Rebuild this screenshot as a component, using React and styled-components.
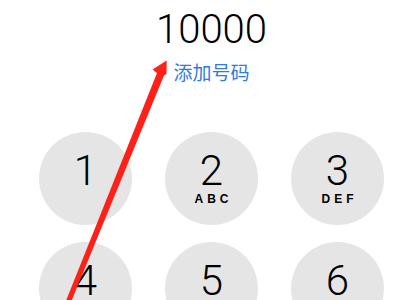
import React from 'react';
import styled, { createGlobalStyle } from 'styled-components';

const GlobalStyle = createGlobalStyle`
  html, body {
    margin: 0;
    padding: 0;
    background: #fff;
  }
  body {
    font-family: Roboto, "Liberation Sans", sans-serif;
  }
`;

const Screen = styled.div`
  position: relative;
  width: 400px;
  height: 300px;
  overflow: hidden;
  background: #fff;
`;

const Dialer = styled.div`
  width: 345px;
  margin-left: 39px;
  padding-top: 10px;
  display: flex;
  flex-direction: column;
  align-items: center;
`;

const Number = styled.div`
  font-family: Roboto, "Liberation Sans", sans-serif;
  font-weight: 300;
  font-size: 40px;
  line-height: 40px;
  color: #000;
`;

const AddLink = styled.div`
  margin-top: 12px;
  font-family: "Noto Sans CJK SC", sans-serif;
  font-size: 19px;
  line-height: 19px;
  color: #2f7be3;
`;

const Keypad = styled.div`
  margin-top: 51px;
  display: grid;
  grid-template-columns: repeat(3, 93px);
  column-gap: 33px;
  row-gap: 17px;
`;

const Key = styled.div`
  width: 93px;
  height: 93px;
  border-radius: 50%;
  background: #e5e5e5;
  display: flex;
  flex-direction: column;
  align-items: center;
  padding-top: 18px;
  box-sizing: border-box;
`;

const Digit = styled.div`
  font-family: Roboto, "Liberation Sans", sans-serif;
  font-weight: 300;
  font-size: 42px;
  line-height: 42px;
  color: #000;
`;

const Letters = styled.div`
  margin-top: 1px;
  height: 12px;
  font-family: "Liberation Sans", Arial, sans-serif;
  font-weight: 700;
  font-size: 12px;
  line-height: 12px;
  letter-spacing: 4px;
  margin-right: -4px;
  color: #000;
`;

const Overlay = styled.svg`
  position: absolute;
  left: 0;
  top: 0;
  pointer-events: none;
`;

const keys = [
  ['1', ''],
  ['2', 'ABC'],
  ['3', 'DEF'],
  ['4', 'GHI'],
  ['5', 'JKL'],
  ['6', 'MNO'],
];

export default function App() {
  return (
    <>
      <GlobalStyle />
      <Screen>
        <Dialer>
          <Number>10000</Number>
          <AddLink>添加号码</AddLink>
          <Keypad>
            {keys.map(([d, l]) => (
              <Key key={d}>
                <Digit>{d}</Digit>
                <Letters>{l}</Letters>
              </Key>
            ))}
          </Keypad>
        </Dialer>
        {/* red annotation arrow */}
        <Overlay width="400" height="300" viewBox="0 0 400 300">
          <polygon
            fill="#fe2118"
            points="166.7,60.5 152.5,69.5 157,73 65.5,302 71,302 164,75.5 166.5,74"
          />
        </Overlay>
      </Screen>
    </>
  );
}
